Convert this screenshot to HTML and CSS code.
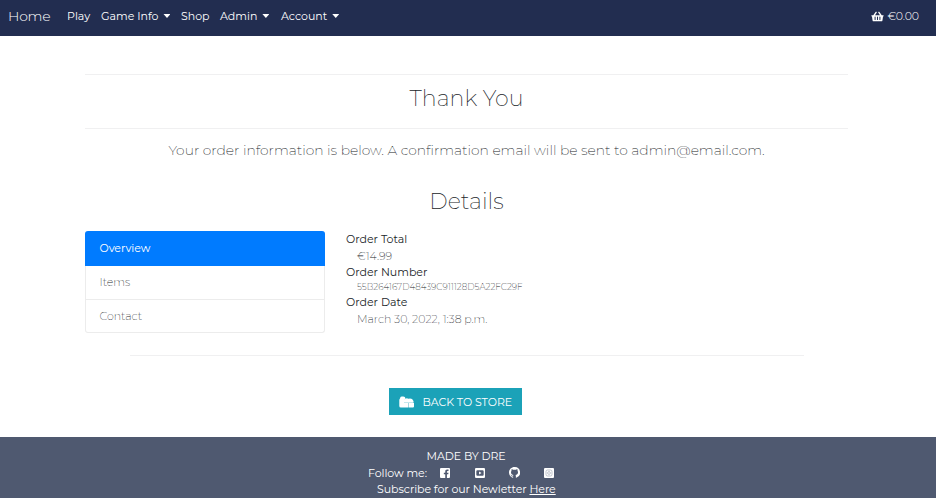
FILE: index.html
```
<!DOCTYPE html>
<html lang="en">
<head>
<meta charset="utf-8">
<title>Thank You</title>
<link rel="stylesheet" href="styles.css">
</head>
<body>
<nav class="navbar">
  <a class="brand">Home</a>
  <a class="nav-link play">Play</a>
  <a class="nav-link game caret">Game Info</a>
  <a class="nav-link shop">Shop</a>
  <a class="nav-link admin caret">Admin</a>
  <a class="nav-link account caret">Account</a>
  <a class="cart"><svg viewBox="0 0 576 512" width="13" height="11"><path fill="currentColor" fill-rule="evenodd" d="M576 216v16c0 13-11 24-24 24h-8l-26 182c-3 24-24 42-48 42H106c-24 0-45-18-48-42L32 256h-8c-13 0-24-11-24-24v-16c0-13 11-24 24-24h67L198 45c11-15 31-18 45-7 15 10 18 30 7 45l-79 109h234L326 83c-11-15-8-35 7-45 14-11 34-8 45 7l107 147h67c13 0 24 11 24 24zM312 392V280a24 24 0 0 0-48 0v112a24 24 0 0 0 48 0zm112 0V280a24 24 0 0 0-48 0v112a24 24 0 0 0 48 0zm-224 0V280a24 24 0 0 0-48 0v112a24 24 0 0 0 48 0z"/></svg><span>€0.00</span></a>
</nav>
<main class="container">
  <header class="title"><h1>Thank You</h1></header>
  <p class="lead">Your order information is below. A confirmation email will be sent to admin@email.com.</p>
  <h2>Details</h2>
  <section class="details">
    <div class="tabs">
      <a class="tab active">Overview</a>
      <a class="tab items">Items</a>
      <a class="tab contact">Contact</a>
    </div>
    <dl>
      <dt>Order Total</dt>
      <dd class="total">€14.99</dd>
      <dt class="number">Order Number</dt>
      <dd class="code">55B264167D48439C911128D5A22FC29F</dd>
      <dt>Order Date</dt>
      <dd class="date">March 30, 2022, 1:38 p.m.</dd>
    </dl>
  </section>
  <div class="actions">
    <a class="button"><svg viewBox="0 0 15 12" width="15" height="12"><path fill="currentColor" d="M1 2.500Q.3 3 .3 4v6q0 1.500 1.500 1.500H5V4.500L6.500 3 6 1.200Q5.500.5 4 .5 1.500 0 1.300 1.500z"/><path fill="currentColor" d="M5 4Q7 1.500 9.500 2.800 13 1.800 14.500 5v1.700H5zM5 7.100h4.600v4.400H5zM10 7.100h5v3.400q0 1-1 1h-4z"/></svg><span>BACK TO STORE</span></a>
  </div>
</main>
<footer>
  <div class="made">MADE BY DRE</div>
  <div class="social"><span>Follow me:</span>
    <svg viewBox="0 0 448 448" width="10" height="10"><path fill="currentColor" d="M48 0h352q48 0 48 48v352q0 48-48 48h-90V278h60l11-70h-71v-43q0-35 38-35h33V70q-105-20-136 33-10 19-10 105h-63v70h63v170H48q-48 0-48-48V48Q0 0 48 0z"/></svg>
    <svg viewBox="0 0 448 448" width="10" height="10"><path fill="currentColor" fill-rule="evenodd" d="M48 0h352q48 0 48 48v352q0 48-48 48H48q-48 0-48-48V48Q0 0 48 0zm62 100q-50 0-50 50v148q0 50 50 50h228q50 0 50-50V150q0-50-50-50zm72 60l112 64-112 64z"/></svg>
    <svg class="github" viewBox="0 0 16 16" width="11" height="11"><path fill="currentColor" d="M8 0C3.580 0 0 3.580 0 8c0 3.540 2.290 6.530 5.470 7.590.4.070.55-.17.55-.38v-1.340c-2.230.48-2.700-1.070-2.700-1.070-.36-.92-.89-1.170-.89-1.170-.73-.5.050-.49.050-.49.810.060 1.230.83 1.230.83.72 1.230 1.880.87 2.340.67.070-.52.280-.87.500-1.070-1.780-.2-3.640-.89-3.640-3.950 0-.87.310-1.590.82-2.150-.08-.2-.36-1.020.08-2.120 0 0 .67-.21 2.200.82a7.600 7.600 0 0 1 4 0c1.530-1.040 2.200-.82 2.200-.82.44 1.100.16 1.920.08 2.120.51.56.82 1.270.82 2.150 0 3.070-1.870 3.750-3.650 3.950.29.25.54.73.54 1.480v2.200c0 .21.150.46.55.38A8 8 0 0 0 8 0z"/></svg>
    <svg viewBox="0 0 448 448" width="10" height="10"><rect width="448" height="448" rx="48" fill="currentColor"/><g class="lens"><rect x="90" y="90" width="268" height="268" rx="70"/><circle cx="224" cy="224" r="62"/></g></svg>
  </div>
  <div class="subscribe">Subscribe for our Newletter <a>Here</a></div>
</footer>
</body>
</html>
```
FILE: styles.css
```
* { box-sizing: border-box; }
body {
  margin: 0;
  height: 498px;
  overflow: hidden;
  display: flex;
  flex-direction: column;
  font-family: Montserrat, Inter, sans-serif;
  font-size: 11px;
  font-weight: 300;
  color: #212529;
  background: #fff;
}
svg { display: block; flex: none; }
.navbar {
  height: 36px;
  flex: none;
  display: flex;
  align-items: center;
  padding: 0 17px 4px 8px;
  background: #222d50;
  color: #fff;
  white-space: nowrap;
}
.brand { width: 59px; font-size: 14px; letter-spacing: -.25px; }
.nav-link { display: flex; align-items: center; font-weight: 400; }
.caret::after {
  content: "";
  width: 7px;
  height: 4px;
  margin-left: 5px;
  background: currentColor;
  clip-path: polygon(0 0, 100% 0, 50% 100%);
}
.play { width: 34px; }
.game { width: 80px; }
.shop { width: 39px; }
.admin { width: 61px; }
.cart { margin-left: auto; display: flex; align-items: center; gap: 3px; }
.cart span { letter-spacing: -.1px; }
.container { width: 763px; height: 401px; margin-left: 85px; flex: none; padding-top: 38px; text-align: center; }
.title { height: 55px; border: solid #f0f0f1; border-width: 1px 0; }
h1, h2 { margin: 0; font-size: 22.2px; line-height: 28px; font-weight: 250; }
h1 { padding-top: 10px; }
.lead { margin: 11px 0 0; font-size: 13.9px; line-height: 20px; font-weight: 250; white-space: nowrap; }
h2 { margin-top: 28px; }
.details { margin-top: 15px; height: 102px; display: flex; text-align: left; }
.tabs { width: 240px; border: 1px solid #ececec; border-top: 0; border-radius: 3px; font-weight: 250; }
.tab { display: flex; align-items: center; height: 34px; padding: 0 0 2px 13.500px; border-bottom: 1px solid #ececec; }
.tab.active { height: 35px; margin: 0 -1px; padding-left: 14.500px; background: #007bff; border: 0; border-radius: 3px 3px 0 0; color: #fff; font-weight: 400; letter-spacing: -.08px; }
.tab.contact { height: 32px; padding-bottom: 0; border: 0; }
dl { margin: 0 0 0 21px; line-height: 16px; white-space: nowrap; }
dt { font-weight: 400; }
dd { margin: 1px 0 0 11px; font-weight: 250; }
.code { margin-top: 0; font-size: 8.8px; line-height: 14px; }
.actions { width: 674px; margin: 22px 0 0 45px; padding: 32px 24px 0 0; border-top: 1px solid #f0f0f1; display: flex; justify-content: center; }
.button { width: 133px; height: 27px; padding-left: 10px; display: flex; align-items: center; gap: 9px; background: #1ba2b8; color: #fff; font-weight: 400; white-space: nowrap; }
.button span { letter-spacing: -.05px; }
footer { flex: 1; padding-top: 11px; background: #4f5970; color: #fff; font-weight: 400; line-height: 16px; letter-spacing: -.06px; white-space: nowrap; }
.made { margin-left: 426.500px; }
.social { height: 17px; margin-left: 368px; display: flex; align-items: center; }
.social span { width: 72px; }
.social svg { margin-right: 24.500px; }
.social .github { margin-right: 24px; }
.lens { fill: none; stroke: #a2a8b4; stroke-width: 30px; }
.subscribe { margin-left: 377px; }
.subscribe a { text-decoration: underline; }
```
